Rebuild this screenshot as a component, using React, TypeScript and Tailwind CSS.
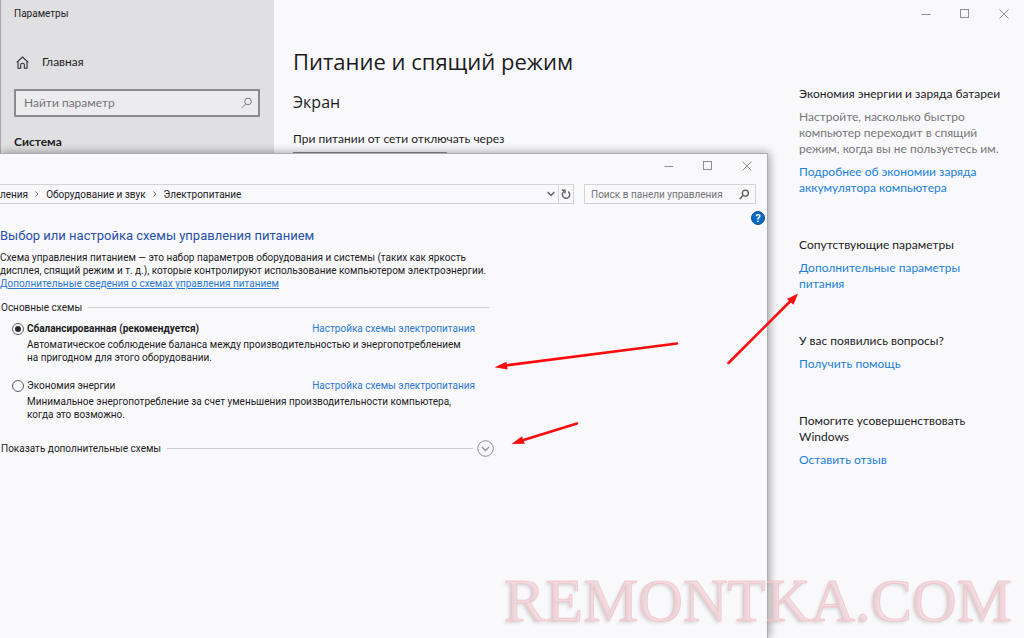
import React from "react";

function WindowControls({ className }: { className: string }) {
  const base = "flex h-5 w-5 items-center justify-center";
  return (
    <div className={`flex items-center gap-[19px] text-[#8f8f92] ${className}`}>
      <button type="button" aria-label="Свернуть" className={base}>
        <svg width="10" height="10" viewBox="0 0 10 10" fill="none" stroke="currentColor">
          <path d="M0.5 5.5H9.5" />
        </svg>
      </button>
      <button type="button" aria-label="Развернуть" className={base}>
        <svg width="10" height="10" viewBox="0 0 10 10" fill="none" stroke="currentColor">
          <rect x="0.5" y="0.5" width="8" height="8" />
        </svg>
      </button>
      <button type="button" aria-label="Закрыть" className={base}>
        <svg width="10" height="10" viewBox="0 0 10 10" fill="none" stroke="currentColor">
          <path d="M0.5 0.5L9.5 9.5M9.5 0.5L0.5 9.5" />
        </svg>
      </button>
    </div>
  );
}

function HomeIcon() {
  return (
    <svg width="13" height="13" viewBox="0 0 13 13" fill="none" stroke="#2b2b2d" strokeWidth="1.1">
      <path d="M0.7 6.4L6.5 1L12.3 6.4" />
      <path d="M2 5.4V12.2H4.7V8.4Q4.7 7.2 6.5 7.2Q8.3 7.2 8.3 8.4V12.2H11V5.4" />
    </svg>
  );
}

function MagnifierIcon({ size, weight, color }: { size: number; weight: number; color: string }) {
  return (
    <svg width={size} height={size} viewBox="0 0 12 12" fill="none" stroke={color} strokeWidth={weight}>
      <circle cx="7.4" cy="4.4" r="3.5" />
      <path d="M5 7L0.8 11.2" />
    </svg>
  );
}

function Crumb({ children }: { children: React.ReactNode }) {
  return (
    <a href="#" className="whitespace-nowrap">
      {children}
    </a>
  );
}

function CrumbArrow() {
  return (
    <svg width="4" height="6" viewBox="0 0 4 6" fill="none" stroke="#6a6a6d">
      <path d="M0.5 0.5L3 3L0.5 5.5" />
    </svg>
  );
}

function Scheme({ id, name, lines, active }: { id: string; name: string; lines: string[]; active?: boolean }) {
  return (
    <div className="flex flex-col gap-[3px] pr-3.5">
      <div className="flex items-center">
        <input
          type="radio"
          id={id}
          name="scheme"
          defaultChecked={active}
          className="mr-[3px] flex h-3 w-3 appearance-none items-center justify-center rounded-full border border-[#5c5c5e] bg-[#fbfbfd] before:h-1.5 before:w-1.5 before:rounded-full checked:before:bg-[#2a2a2c]"
        />
        <label htmlFor={id} className={active ? "font-bold" : ""}>
          {name}
        </label>
        <a href="#" className="ml-auto text-[#2b78cf]">
          Настройка схемы электропитания
        </a>
      </div>
      <p className="pl-[15px]">
        {lines.map((line) => (
          <span key={line} className="block whitespace-nowrap">
            {line}
          </span>
        ))}
      </p>
    </div>
  );
}

function PowerWindow() {
  return (
    <section className="absolute bottom-0 left-0 top-[153px] w-3/4 overflow-visible border-r border-t border-[#adadaf] bg-[#f9f9fb] font-['Roboto',sans-serif] text-[10px] leading-[13px] text-[#1c1c1e] shadow-[1px_0_9px_rgba(0,0,0,0.4)]">
      <WindowControls className="justify-end pr-2.5 pt-0.5" />
      <div className="mt-2 flex h-5 gap-2.5 pr-[11px]">
        <nav className="flex grow items-center border-y border-[#d4d4d7]">
          <div className="flex grow items-center gap-[7px]">
            <Crumb>ления</Crumb>
            <CrumbArrow />
            <Crumb>Оборудование и звук</Crumb>
            <CrumbArrow />
            <Crumb>Электропитание</Crumb>
          </div>
          <button type="button" aria-label="Предыдущие расположения" className="px-[3px]">
            <svg width="8" height="6" viewBox="0 0 8 6" fill="none" stroke="#626265" strokeWidth="1.5">
              <path d="M0.7 1L4 4.4L7.3 1" />
            </svg>
          </button>
          <button
            type="button"
            aria-label="Обновить"
            className="flex h-5 w-4 items-center justify-center border border-[#d4d4d7]"
          >
            <svg width="10" height="11" viewBox="0 0 10 11" fill="none" stroke="#626265" strokeWidth="1.4">
              <path d="M7.2 2.6A3.7 3.7 0 1 1 3.2 2.4" />
              <path d="M0.8 1.2H4V4.6" />
            </svg>
          </button>
        </nav>
        <label className="flex w-[172px] items-center border border-[#d4d4d7] px-1.5">
          <input
            type="text"
            aria-label="Поиск в панели управления"
            placeholder="Поиск в панели управления"
            className="w-full min-w-0 bg-transparent outline-none placeholder:text-[#737376]"
          />
          <MagnifierIcon size={11} weight={1.6} color="#5b5b5e" />
        </label>
      </div>
      <div className="flex justify-end pr-0.5 pt-[7px]">
        <button
          type="button"
          aria-label="Справка"
          className="flex h-3.5 w-3.5 items-center justify-center rounded-full border border-[#0a4f96] bg-[#0567c6] text-[11px] font-bold text-white"
        >
          ?
        </button>
      </div>
      <div className="flex w-[489px] flex-col">
        <h2 className="mt-0.5 whitespace-nowrap text-[13px] leading-[18px] text-[#2850a8]">
          Выбор или настройка схемы управления питанием
        </h2>
        <p className="mt-1.5">
          <span className="block whitespace-nowrap">
            Схема управления питанием — это набор параметров оборудования и системы (таких как яркость
          </span>
          <span className="block whitespace-nowrap">
            дисплея, спящий режим и т. д.), которые контролируют использование компьютером электроэнергии.
          </span>
          <a href="#" className="whitespace-nowrap text-[#2b78cf] underline">
            Дополнительные сведения о схемах управления питанием
          </a>
        </p>
        <div className="mt-[11px] flex items-center gap-1.5 pl-px">
          <h3>Основные схемы</h3>
          <span className="h-px grow bg-[#cfcfd2]" />
        </div>
        <div className="mt-2 flex flex-col gap-[15px] pl-3">
          <Scheme
            id="balanced"
            name="Сбалансированная (рекомендуется)"
            active
            lines={[
              "Автоматическое соблюдение баланса между производительностью и энергопотреблением",
              "на пригодном для этого оборудовании.",
            ]}
          />
          <Scheme
            id="saver"
            name="Экономия энергии"
            lines={[
              "Минимальное энергопотребление за счет уменьшения производительности компьютера,",
              "когда это возможно.",
            ]}
          />
        </div>
      </div>
      <div className="mt-[19px] flex w-[494px] items-center gap-1.5 pl-px">
        <h3>Показать дополнительные схемы</h3>
        <span className="mr-[-2px] h-px grow bg-[#cfcfd2]" />
        <button type="button" aria-label="Показать дополнительные схемы">
          <svg width="17" height="17" viewBox="0 0 17 17" fill="none" stroke="#8e8e91" className="block">
            <circle cx="8.5" cy="8.5" r="7.8" />
            <path d="M5 7L8.5 10.5L12 7" strokeWidth="1.3" />
          </svg>
        </button>
      </div>
    </section>
  );
}

function AsideBlock({ title, text, link }: { title: string; text?: string; link: string }) {
  return (
    <section className="flex flex-col gap-[7px]">
      <h3 className="text-[#1c1c1e]">{title}</h3>
      {text && <p className="text-[#77777a]">{text}</p>}
      <a href="#" className="text-[#1a7fd8]">
        {link}
      </a>
    </section>
  );
}

function Arrow({ d, head }: { d: string; head: string }) {
  return (
    <>
      <path d={d} stroke="#fb0d0f" strokeWidth="2.6" strokeLinecap="round" />
      <path d={head} fill="#fb0d0f" />
    </>
  );
}

export default function App() {
  return (
    <div className="relative flex min-h-screen overflow-hidden bg-[#f9f9fb] font-['Lato',sans-serif] text-[12px] leading-4 text-[#1c1c1e]">
      <aside className="w-[274px] shrink-0 border-l border-[#a4a8b0] bg-[#e0e0e2] pl-[13px] pr-3.5 pt-1.5">
        <p className="font-['Roboto',sans-serif] text-[10px]">Параметры</p>
        <a href="#" className="mt-8 flex items-center gap-[13px] pl-0.5">
          <HomeIcon />
          Главная
        </a>
        <label className="mt-[19px] flex h-7 items-center border-2 border-[#8b8b8e] bg-[#ececee] px-1.5">
          <input
            type="text"
            aria-label="Найти параметр"
            placeholder="Найти параметр"
            className="w-full min-w-0 bg-transparent pl-0.5 outline-none placeholder:text-[#747477]"
          />
          <MagnifierIcon size={12} weight={1} color="#77777a" />
        </label>
        <h2 className="mt-[17px] font-bold">Система</h2>
      </aside>

      <main className="grow pl-[19px] pt-[47px]">
        <h1 className="whitespace-nowrap font-['Open_Sans',sans-serif] text-[22px] leading-7">
          Питание и спящий режим
        </h1>
        <h2 className="mt-[17px] font-['Open_Sans',sans-serif] text-[16px] leading-5">Экран</h2>
        <label htmlFor="screen-off" className="mt-[19px] block">
          При питании от сети отключать через
        </label>
        <select
          id="screen-off"
          className="mt-[5px] block h-7 w-[154px] appearance-none border-2 border-[#8b8b8e] bg-transparent"
        />
      </main>

      <aside className="flex w-[225px] shrink-0 flex-col pr-2.5">
        <WindowControls className="justify-end pt-1" />
        <div className="mt-[62px] flex flex-col gap-[41px] pr-2.5">
          <AsideBlock
            title="Экономия энергии и заряда батареи"
            text="Настройте, насколько быстро компьютер переходит в спящий режим, когда вы не пользуетесь им."
            link="Подробнее об экономии заряда аккумулятора компьютера"
          />
          <AsideBlock title="Сопутствующие параметры" link="Дополнительные параметры питания" />
          <AsideBlock title="У вас появились вопросы?" link="Получить помощь" />
          <AsideBlock title="Помогите усовершенствовать Windows" link="Оставить отзыв" />
        </div>
      </aside>

      <PowerWindow />

      <svg
        className="pointer-events-none absolute left-0 top-0"
        width="1024"
        height="638"
        viewBox="0 0 1024 638"
        fill="none"
        aria-hidden="true"
      >
        <Arrow d="M677 343.5L505 365.5" head="M494.5 367.2L506.5 361.8L507.6 369.6Z" />
        <Arrow d="M577 423.5L522 440.5" head="M511.5 444L522 436.2L524.8 443.8Z" />
        <Arrow d="M728.5 363L790 301.5" head="M798 293.5L793.5 304.8L787 299Z" />
      </svg>

      <p className="pointer-events-none absolute bottom-1 right-3 whitespace-nowrap font-['Liberation_Serif',serif] text-[62px] leading-[68px] text-[#f5cfd3]/60 [-webkit-text-stroke:1px_rgba(238,184,189,0.6)] [text-shadow:-2px_2px_3px_rgba(120,120,125,0.25)]">
        REMONTKA.COM
      </p>
    </div>
  );
}
